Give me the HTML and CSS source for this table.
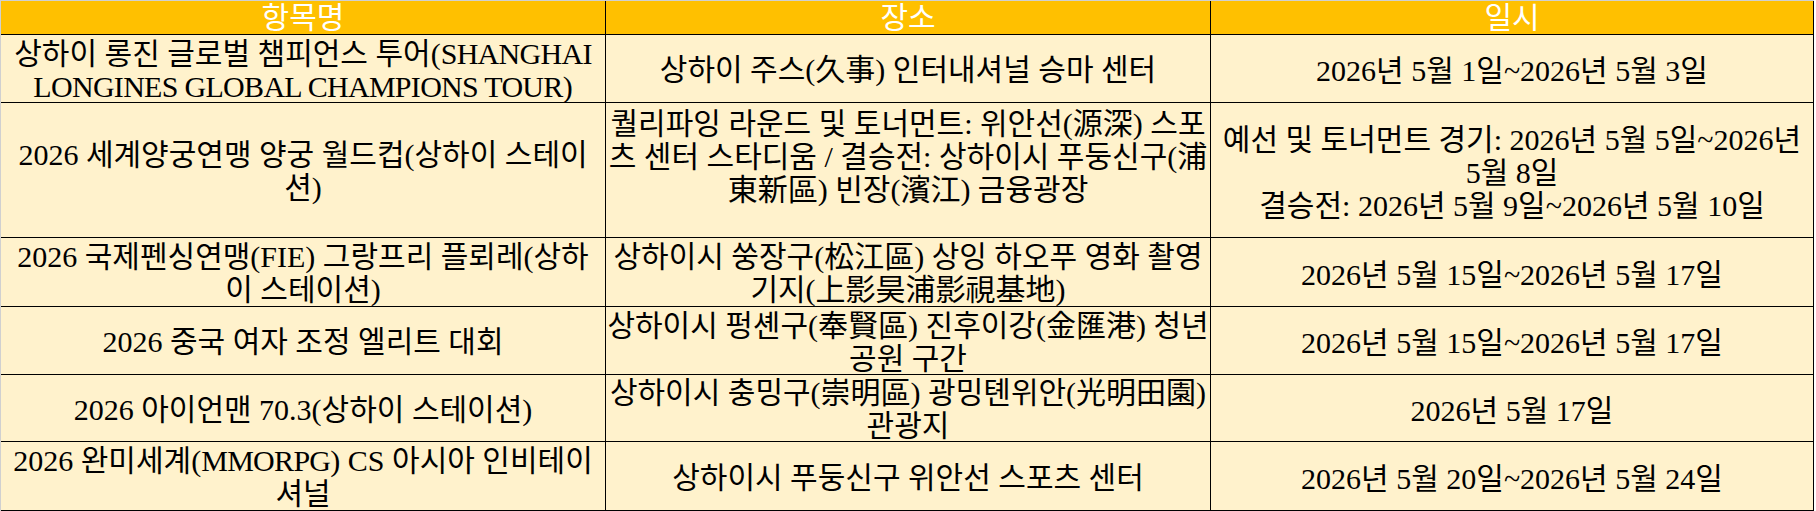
FILE: index.html
```html
<!DOCTYPE html>
<html lang="ko">
<head>
<meta charset="utf-8">
<title>일정표</title>
<link rel="stylesheet" href="styles.css">
</head>
<body>
<div class="sheet">
  <div class="cell head">항목명</div>
  <div class="cell head">장소</div>
  <div class="cell head last">일시</div>

  <div class="cell"><div class="txt">상하이 롱진 글로벌 챔피언스 투어(<span class="latin">SHANGHAI</span><br><span class="latin">LONGINES GLOBAL CHAMPIONS TOUR</span>)</div></div>
  <div class="cell">상하이 주스(久事) 인터내셔널 승마 센터</div>
  <div class="cell last">2026년 5월 1일~2026년 5월 3일</div>

  <div class="cell">2026 세계양궁연맹 양궁 월드컵(상하이 스테이<br>션)</div>
  <div class="cell top">퀄리파잉 라운드 및 토너먼트: 위안선(源深) 스포<br>츠 센터 스타디움 / 결승전: 상하이시 푸둥신구(浦<br>東新區) 빈장(濱江) 금융광장</div>
  <div class="cell last">예선 및 토너먼트 경기: 2026년 5월 5일~2026년<br>5월 8일<br>결승전: 2026년 5월 9일~2026년 5월 10일</div>

  <div class="cell">2026 국제펜싱연맹(FIE) 그랑프리 플뢰레(상하<br>이 스테이션)</div>
  <div class="cell">상하이시 쑹장구(松江區) 상잉 하오푸 영화 촬영<br>기지(上影昊浦影視基地)</div>
  <div class="cell last">2026년 5월 15일~2026년 5월 17일</div>

  <div class="cell">2026 중국 여자 조정 엘리트 대회</div>
  <div class="cell">상하이시 펑셴구(奉賢區) 진후이강(金匯港) 청년<br>공원 구간</div>
  <div class="cell last">2026년 5월 15일~2026년 5월 17일</div>

  <div class="cell">2026 아이언맨 70.3(상하이 스테이션)</div>
  <div class="cell">상하이시 충밍구(崇明區) 광밍톈위안(光明田園)<br>관광지</div>
  <div class="cell last">2026년 5월 17일</div>

  <div class="cell"><div class="txt">2026 완미세계(<span class="latin">MMORPG</span>) CS 아시아 인비테이<br>셔널</div></div>
  <div class="cell">상하이시 푸둥신구 위안선 스포츠 센터</div>
  <div class="cell last">2026년 5월 20일~2026년 5월 24일</div>
</div>
</body>
</html>
```

FILE: styles.css
```css
html, body {
  margin: 0;
  padding: 0;
  background: #ffffff;
}

.sheet {
  display: grid;
  grid-template-columns: 605px 605px 603px;
  grid-template-rows: 34px 68px 135px 69px 68px 67px 69px;
  width: 1813px;
  border-top: 1px solid #d0d0d0;
  border-left: 1px solid #d0d0d0;
  font-family: "Liberation Serif", "Noto Sans CJK KR", serif;
  font-size: 30px;
  line-height: 33px;
  color: #000000;
}

.cell {
  box-sizing: border-box;
  display: flex;
  align-items: center;
  justify-content: center;
  text-align: center;
  white-space: nowrap;
  background: #fff2cc;
  border-right: 1px solid #000000;
  border-bottom: 1px solid #000000;
  padding: 2px 2px 0;
}

.cell.top {
  align-items: flex-start;
  padding-top: 4px;
}

.cell.last {
  padding-top: 4px;
}

.cell.head {
  background: #ffc000;
  color: #ffffff;
  padding-top: 0;
}

.txt {
  text-align: center;
}

.latin {
  letter-spacing: -0.7px;
}
```
